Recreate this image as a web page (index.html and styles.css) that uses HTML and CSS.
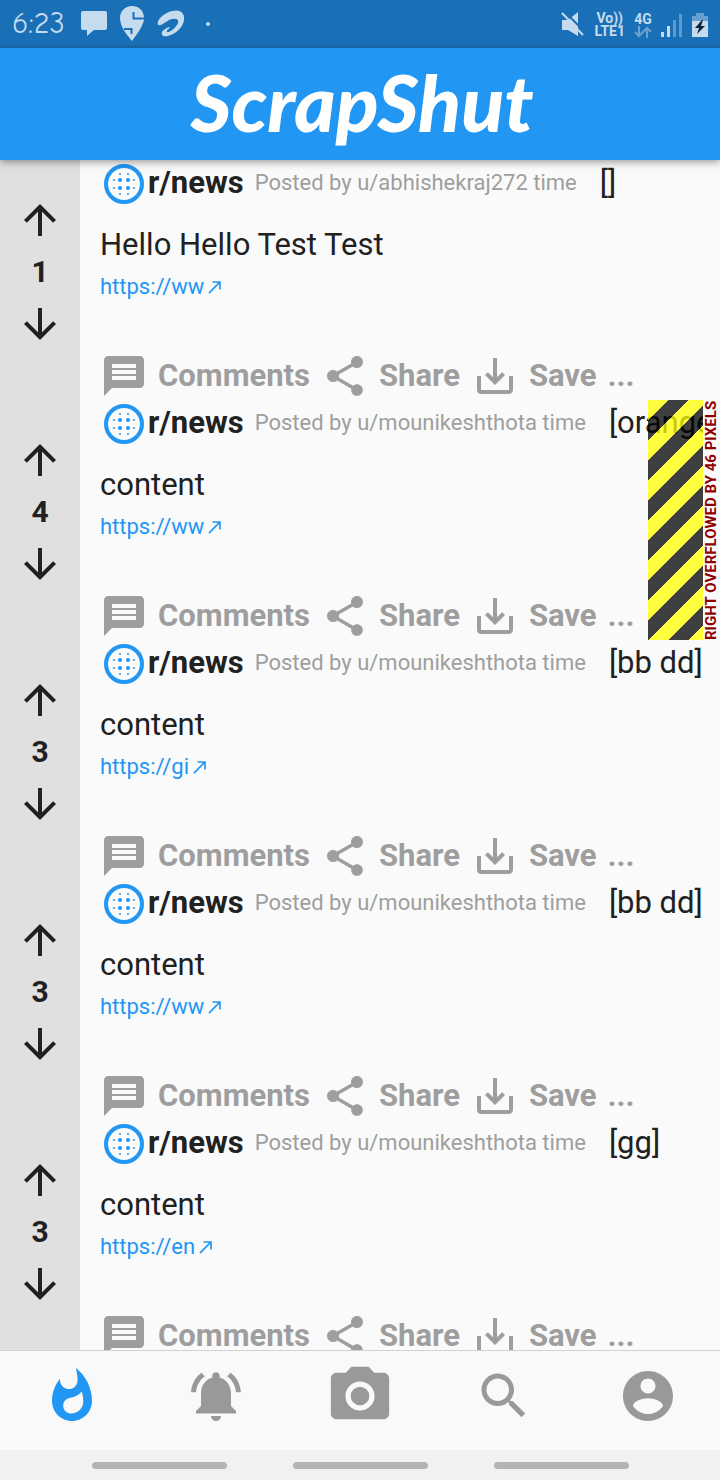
FILE: index.html
```html
<!DOCTYPE html>
<html lang="en">
<head>
<meta charset="utf-8">
<meta name="viewport" content="width=device-width, initial-scale=1">
<title>ScrapShut</title>
<link rel="stylesheet" href="styles.css">
</head>
<body>
<svg class="sprite" aria-hidden="true">
  <symbol id="up" viewBox="0 0 24 24"><path d="M4 12l1.41 1.41L11 7.83V20h2V7.83l5.58 5.59L20 12l-8-8-8 8z"/></symbol>
  <symbol id="down" viewBox="0 0 24 24"><path d="M20 12l-1.41-1.41L13 16.17V4h-2v12.17l-5.58-5.59L4 12l8 8 8-8z"/></symbol>
  <symbol id="blur" viewBox="0 0 24 24"><circle cx="12" cy="12" r="9" fill="none" stroke="currentColor" stroke-width="2"/><circle cx="10" cy="10" r="1"/><circle cx="14" cy="10" r="1"/><circle cx="10" cy="14" r="1"/><circle cx="14" cy="14" r="1"/><circle cx="7" cy="10" r=".5"/><circle cx="7" cy="14" r=".5"/><circle cx="17" cy="10" r=".5"/><circle cx="17" cy="14" r=".5"/><circle cx="10" cy="7" r=".5"/><circle cx="14" cy="7" r=".5"/><circle cx="10" cy="17" r=".5"/><circle cx="14" cy="17" r=".5"/></symbol>
  <symbol id="made" viewBox="0 0 24 24"><path d="M9 5v2h6.59L4 18.59 5.41 20 17 8.41V15h2V5z"/></symbol>
  <symbol id="comment" viewBox="0 0 24 24"><path d="M20 2H4c-1.1 0-1.99.9-1.99 2L2 22l4-4h14c1.1 0 2-.9 2-2V4c0-1.1-.9-2-2-2zm-2 12H6v-2h12v2zm0-3H6V9h12v2zm0-3H6V6h12v2z"/></symbol>
  <symbol id="share" viewBox="0 0 24 24"><path d="M18 16.08c-.76 0-1.44.3-1.96.77L8.91 12.7c.05-.23.09-.46.09-.7s-.04-.47-.09-.7l7.05-4.11c.54.5 1.25.81 2.04.81 1.66 0 3-1.34 3-3s-1.34-3-3-3-3 1.34-3 3c0 .24.04.47.09.7L8.04 9.81C7.5 9.31 6.79 9 6 9c-1.66 0-3 1.34-3 3s1.34 3 3 3c.79 0 1.5-.31 2.04-.81l7.12 4.16c-.05.21-.08.43-.08.65 0 1.61 1.31 2.92 2.92 2.92s2.92-1.31 2.92-2.92-1.31-2.92-2.92-2.92z"/></symbol>
  <symbol id="save" viewBox="0 0 24 24"><path d="M19 12v7H5v-7H3v7c0 1.1.9 2 2 2h14c1.1 0 2-.9 2-2v-7h-2zm-6 .67l2.59-2.58L17 11.5l-5 5-5-5 1.41-1.41L11 12.67V3h2v9.67z"/></symbol>
</svg>
<div class="app">
  <div class="status">
    <div class="status-group">
      <span class="clock">6:23</span>
      <svg class="note" viewBox="0 0 26 26" aria-hidden="true"><path d="M2 0h22q2 0 2 2v15q0 2-2 2H13l-7 6v-6H2q-2 0-2-2V2q0-2 2-2z"/></svg>
      <svg class="pin" viewBox="0 0 24 36" aria-hidden="true"><path d="M12 0C5 0 0 5 0 12c0 8 6 16 12 23 5-7 9-12 11-18 1-2 1-4 1-6C23 4 19 0 12 0z"/><path class="cut" d="M13.500 6v6.500H25M4 23h7.500v5"/></svg>
      <svg class="swirl" viewBox="0 0 28 28" aria-hidden="true"><path d="M1 15C-1 10 7 3 15 1c8-2 13 2 12 9-1 8-9 14-16 16-5 1-7-1-6-4 1-2 4-4 7-5l1 1c-2 1-4 3-3 4 2 1 9-4 11-9 1-4-2-5-6-4C10 10 4 17 1 15z"/></svg>
      <i class="dot"></i>
    </div>
    <div class="status-group signal">
      <svg class="mute" viewBox="0 0 24 26" aria-hidden="true"><path d="M1 8h6l10-8v24L7 18H1z"/><path class="slash-gap" d="M4 0l22 22"/><path class="slash" d="M1 1l21 22"/></svg>
      <span class="carrier"><b>Vo))</b><b>LTE1</b></span>
      <span class="network"><b>4G</b><svg viewBox="0 0 18 12" aria-hidden="true"><path d="M5 0v10M1 6l4 4 4-4M13 12V2M9 6l4-4 4 4"/></svg></span>
      <svg class="bars" viewBox="0 0 22 23" aria-hidden="true"><path d="M0 18h3v5H0zM6 12h3v11H6z"/><path opacity=".4" d="M12 6h3v17h-3zM18 0h3v23h-3z"/></svg>
      <svg class="battery" viewBox="0 0 16 24" aria-hidden="true"><path opacity=".45" d="M4 0h8v3h4v6H0V3h4z"/><path d="M0 8h16v16H0z"/><path class="bolt" d="M10 7L3 15h4l-2 6 8-8H9l2-6z"/></svg>
    </div>
  </div>
  <header class="topbar"><h1>ScrapShut</h1></header>

  <main class="feed">
    <article class="post">
      <div class="votes"><button aria-label="Upvote"><svg class="icon"><use href="#up"/></svg></button><b>1</b><button aria-label="Downvote"><svg class="icon"><use href="#down"/></svg></button></div>
      <div class="body">
        <div class="meta"><svg class="icon blue"><use href="#blur"/></svg><b>r/news</b><span class="by">Posted by u/abhishekraj272 time</span><span class="tags">[]</span></div>
        <h2>Hello Hello Test Test</h2>
        <a class="link" href="#">https://ww<svg><use href="#made"/></svg></a>
        <div class="actions"><button><svg class="icon"><use href="#comment"/></svg>Comments</button><button><svg class="icon"><use href="#share"/></svg>Share</button><button><svg class="icon"><use href="#save"/></svg>Save</button><button>...</button></div>
      </div>
    </article>
    <article class="post">
      <div class="votes"><button aria-label="Upvote"><svg class="icon"><use href="#up"/></svg></button><b>4</b><button aria-label="Downvote"><svg class="icon"><use href="#down"/></svg></button></div>
      <div class="body">
        <div class="meta"><svg class="icon blue"><use href="#blur"/></svg><b>r/news</b><span class="by">Posted by u/mounikeshthota time</span><span class="tags">[orange]</span></div>
        <h2>content</h2>
        <a class="link" href="#">https://ww<svg><use href="#made"/></svg></a>
        <div class="actions"><button><svg class="icon"><use href="#comment"/></svg>Comments</button><button><svg class="icon"><use href="#share"/></svg>Share</button><button><svg class="icon"><use href="#save"/></svg>Save</button><button>...</button></div>
      </div>
      <div class="overflow"><i class="stripes"></i><span>RIGHT OVERFLOWED BY 46 PIXELS</span></div>
    </article>
    <article class="post">
      <div class="votes"><button aria-label="Upvote"><svg class="icon"><use href="#up"/></svg></button><b>3</b><button aria-label="Downvote"><svg class="icon"><use href="#down"/></svg></button></div>
      <div class="body">
        <div class="meta"><svg class="icon blue"><use href="#blur"/></svg><b>r/news</b><span class="by">Posted by u/mounikeshthota time</span><span class="tags">[bb dd]</span></div>
        <h2>content</h2>
        <a class="link" href="#">https://gi<svg><use href="#made"/></svg></a>
        <div class="actions"><button><svg class="icon"><use href="#comment"/></svg>Comments</button><button><svg class="icon"><use href="#share"/></svg>Share</button><button><svg class="icon"><use href="#save"/></svg>Save</button><button>...</button></div>
      </div>
    </article>
    <article class="post">
      <div class="votes"><button aria-label="Upvote"><svg class="icon"><use href="#up"/></svg></button><b>3</b><button aria-label="Downvote"><svg class="icon"><use href="#down"/></svg></button></div>
      <div class="body">
        <div class="meta"><svg class="icon blue"><use href="#blur"/></svg><b>r/news</b><span class="by">Posted by u/mounikeshthota time</span><span class="tags">[bb dd]</span></div>
        <h2>content</h2>
        <a class="link" href="#">https://ww<svg><use href="#made"/></svg></a>
        <div class="actions"><button><svg class="icon"><use href="#comment"/></svg>Comments</button><button><svg class="icon"><use href="#share"/></svg>Share</button><button><svg class="icon"><use href="#save"/></svg>Save</button><button>...</button></div>
      </div>
    </article>
    <article class="post">
      <div class="votes"><button aria-label="Upvote"><svg class="icon"><use href="#up"/></svg></button><b>3</b><button aria-label="Downvote"><svg class="icon"><use href="#down"/></svg></button></div>
      <div class="body">
        <div class="meta"><svg class="icon blue"><use href="#blur"/></svg><b>r/news</b><span class="by">Posted by u/mounikeshthota time</span><span class="tags">[gg]</span></div>
        <h2>content</h2>
        <a class="link" href="#">https://en<svg><use href="#made"/></svg></a>
        <div class="actions"><button><svg class="icon"><use href="#comment"/></svg>Comments</button><button><svg class="icon"><use href="#share"/></svg>Share</button><button><svg class="icon"><use href="#save"/></svg>Save</button><button>...</button></div>
      </div>
    </article>
  </main>

  <nav class="tabs">
    <button class="active" aria-label="Trending"><svg viewBox="0 0 24 24"><path d="M13.5.67s.74 2.65.74 4.8c0 2.06-1.35 3.73-3.41 3.73-2.07 0-3.63-1.67-3.63-3.73l.03-.36C5.21 7.51 4 10.62 4 14c0 4.42 3.58 8 8 8s8-3.58 8-8C20 8.61 17.41 3.8 13.5.67zM11.71 19c-1.78 0-3.22-1.4-3.22-3.14 0-1.62 1.05-2.76 2.81-3.12 1.77-.36 3.6-1.21 4.62-2.58.39 1.29.59 2.65.59 4.04 0 2.65-2.15 4.8-4.8 4.8z"/></svg></button>
    <button aria-label="Notifications"><svg viewBox="0 0 24 24"><path d="M7.58 4.08L6.15 2.65C3.75 4.48 2.17 7.3 2.03 10.5h2c.15-2.65 1.51-4.97 3.55-6.42zm12.39 6.42h2c-.15-3.2-1.73-6.02-4.12-7.85l-1.42 1.43c2.02 1.45 3.39 3.77 3.54 6.42zM18 11c0-3.07-1.64-5.64-4.5-6.32V4c0-.83-.67-1.5-1.5-1.5s-1.5.67-1.5 1.5v.68C7.63 5.36 6 7.92 6 11v5l-2 2v1h16v-1l-2-2v-5zm-6 11c.14 0 .27-.01.4-.04.65-.14 1.18-.58 1.44-1.18.1-.24.15-.5.15-.78h-4c.01 1.1.9 2 2.01 2z"/></svg></button>
    <button aria-label="Camera"><svg class="large" viewBox="0 0 24 24"><circle cx="12" cy="12" r="3.2"/><path d="M9 2L7.17 4H4c-1.1 0-2 .9-2 2v12c0 1.1.9 2 2 2h16c1.1 0 2-.9 2-2V6c0-1.1-.9-2-2-2h-3.17L15 2H9zm3 15c-2.76 0-5-2.24-5-5s2.24-5 5-5 5 2.24 5 5-2.24 5-5 5z"/></svg></button>
    <button aria-label="Search"><svg viewBox="0 0 24 24"><path d="M15.5 14h-.79l-.28-.27C15.41 12.59 16 11.11 16 9.5 16 5.91 13.09 3 9.5 3S3 5.91 3 9.5 5.91 16 9.5 16c1.61 0 3.09-.59 4.23-1.57l.27.28v.79l5 4.99L20.49 19l-4.99-5zm-6 0C7.01 14 5 11.99 5 9.5S7.01 5 9.5 5 14 7.01 14 9.5 11.99 14 9.5 14z"/></svg></button>
    <button aria-label="Account"><svg viewBox="0 0 24 24"><path d="M12 2C6.48 2 2 6.48 2 12s4.48 10 10 10 10-4.48 10-10S17.52 2 12 2zm0 3c1.66 0 3 1.34 3 3s-1.34 3-3 3-3-1.34-3-3 1.34-3 3-3zm0 14.2c-2.5 0-4.71-1.28-6-3.22.03-1.99 4-3.08 6-3.08 1.99 0 5.97 1.09 6 3.08-1.29 1.94-3.5 3.22-6 3.22z"/></svg></button>
  </nav>
  <div class="gestures"><i></i><i></i><i></i></div>
</div>
</body>
</html>
```
FILE: styles.css
```css
* { box-sizing: border-box; }
body { margin: 0; background: #fafafa; color: #212121; font-family: Roboto, "Liberation Sans", sans-serif; }
button { display: flex; align-items: center; border: 0; padding: 0; background: none; color: inherit; font: inherit; cursor: pointer; }
svg { display: block; flex: none; fill: currentColor; }
.sprite { position: absolute; width: 0; height: 0; }
.icon { width: 48px; height: 48px; }
.app { display: flex; flex-direction: column; height: 100vh; }

.status { display: flex; flex: none; justify-content: space-between; height: 48px; padding: 0 12px; background: #1a70b7; color: #c5dbee; }
.status-group { display: flex; align-items: center; gap: 13px; }
.clock { width: 56px; font-family: "Comic Neue", Lato, sans-serif; font-size: 30px; line-height: 48px; }
.note { width: 26px; height: 26px; }
.pin { width: 24px; height: 36px; }
.cut { fill: none; stroke: #1a70b7; stroke-width: 2; }
.swirl { width: 28px; height: 28px; }
.dot { width: 4px; height: 4px; margin-left: 8px; border-radius: 50%; background: #c5dbee; }
.signal { gap: 9px; padding-top: 2px; }
.mute { width: 24px; height: 26px; }
.slash, .slash-gap { fill: none; stroke: #c5dbee; stroke-width: 2; }
.slash-gap { stroke: #1a70b7; }
.carrier, .network { display: flex; flex-direction: column; align-items: center; font-size: 14px; line-height: 13px; }
.network svg { width: 18px; height: 12px; fill: none; stroke: #6ba2d0; stroke-width: 2; }
.bars { width: 22px; height: 23px; }
.battery { width: 16px; height: 24px; }
.bolt { fill: #10243a; }

.topbar { position: relative; z-index: 1; display: flex; flex: none; justify-content: center; align-items: center; height: 112px; padding: 0 0 4px 4px; background: #2196f3; color: #fff; box-shadow: 0 2px 8px rgba(0, 0, 0, .4); }
.topbar h1 { margin: 0; font: italic 900 79px/96px Lato, sans-serif; }

.feed { flex: 1; min-height: 0; overflow: hidden auto; scrollbar-width: none; }
.post { position: relative; display: flex; min-height: 240px; overflow: hidden; }
.votes { display: flex; flex: none; flex-direction: column; align-items: center; width: 80px; padding-top: 36px; background: #e0e0e0; font-size: 30px; line-height: 56px; }
.body { display: flex; flex: 1; flex-direction: column; align-items: flex-start; min-width: 0; padding-left: 20px; white-space: nowrap; }
.meta { display: flex; align-items: center; height: 48px; font-size: 31px; line-height: 46px; }
.meta b, .meta span { padding-bottom: 2px; }
.blue { color: #2196f3; }
.meta .by { margin: 0 23px 0 11px; color: #9e9e9e; font-size: 22px; }
.post h2 { margin: 19px 0 0; font-size: 31px; font-weight: 400; line-height: 36px; }
.link { display: flex; align-items: center; margin-top: 10px; color: #2196f3; font-size: 22px; line-height: 28px; text-decoration: none; }
.link svg { width: 20px; height: 20px; margin-left: 1px; }
.actions { display: flex; gap: 11px; height: 48px; margin-top: auto; color: #9e9e9e; font-size: 31px; font-weight: 700; line-height: 46px; }
.actions button { gap: 10px; }

.overflow { position: absolute; top: 0; right: 0; bottom: 0; display: flex; }
.stripes { width: 55px; background: linear-gradient(135deg, rgba(255, 255, 0, .75) 25%, rgba(0, 0, 0, .75) 25% 50%, rgba(255, 255, 0, .75) 50% 75%, rgba(0, 0, 0, .75) 75%) 1px 0 / 40px 40px; }
.overflow span { width: 17px; background: #fafafa; color: #900000; font-size: 15px; font-weight: 700; line-height: 17px; text-align: center; white-space: nowrap; writing-mode: vertical-rl; rotate: 180deg; }

.tabs { display: flex; flex: none; height: 100px; padding-bottom: 10px; border-top: 1px solid #d2d2d2; background: #f9f9f9; color: #999; }
.tabs button { flex: 1; justify-content: center; }
.tabs svg { width: 60px; height: 60px; }
.tabs .large { width: 70px; height: 70px; }
.tabs .active { color: #2196f3; }
.gestures { display: flex; flex: none; justify-content: center; align-items: center; gap: 66px; height: 30px; background: #f1f1f1; }
.gestures i { width: 135px; height: 7px; border-radius: 4px; background: #b4b4b4; }
```
